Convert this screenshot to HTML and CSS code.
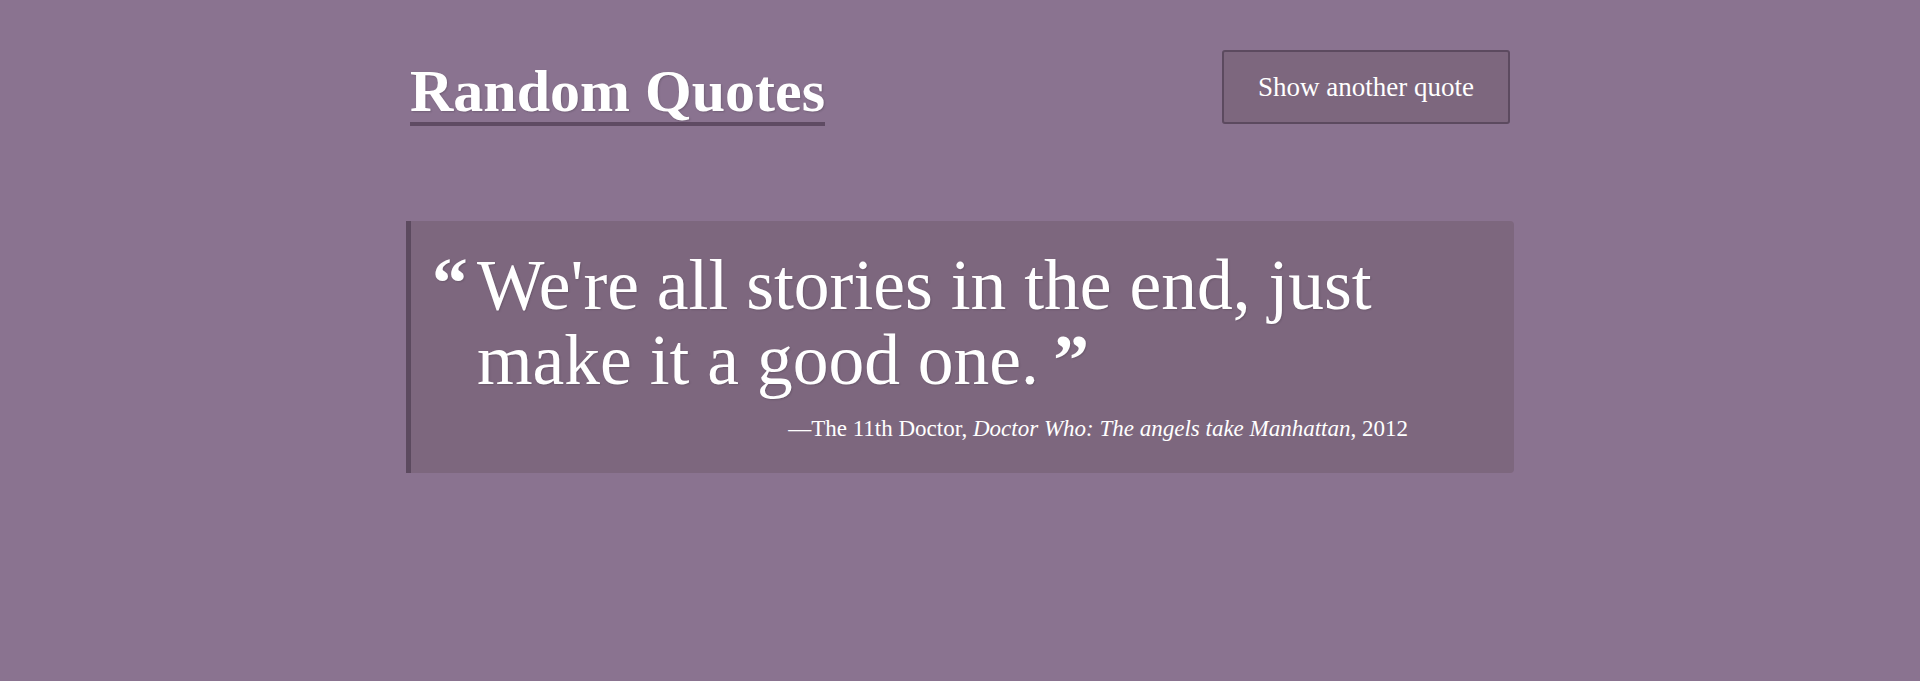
FILE: index.html
```html
<!DOCTYPE html>
<html lang="en">
<head>
<meta charset="utf-8">
<title>Random Quotes</title>
<link rel="stylesheet" href="styles.css">
</head>
<body>
<div class="container">
  <header class="header">
    <h1 class="title">Random Quotes</h1>
    <button class="btn" type="button">Show another quote</button>
  </header>
  <blockquote class="quote">
    <p class="quote-text">We're all stories in the end, just make it a good one.</p>
    <footer class="quote-source">—The 11th Doctor, <cite class="quote-cite">Doctor Who: The angels take Manhattan</cite>, 2012</footer>
  </blockquote>
</div>
</body>
</html>
```

FILE: styles.css
```css
html, body {
  margin: 0;
  padding: 0;
}

body {
  background: #8a7390;
  color: #ffffff;
  font-family: "Liberation Serif", "Times New Roman", serif;
  min-height: 681px;
}

.container {
  width: 1100px;
  margin: 0 auto;
}

.header {
  display: flex;
  justify-content: space-between;
  align-items: flex-start;
  padding-top: 50px;
}

.title {
  margin: 11px 0 0;
  font-size: 60px;
  font-weight: 700;
  line-height: 1;
  padding-bottom: 1px;
  border-bottom: 4px solid #5f4b63;
  text-shadow: 1px 1px 2px rgba(0, 0, 0, 0.18);
}

.btn {
  width: 288px;
  height: 74px;
  margin: 0;
  padding: 0;
  background: #7d677e;
  border: 2px solid #5c4a5f;
  border-radius: 3px;
  color: #ffffff;
  font-family: "Liberation Serif", "Times New Roman", serif;
  font-size: 27px;
  line-height: 1;
  cursor: pointer;
}

.quote {
  position: relative;
  margin: 95px -4px 0 -4px;
  padding: 26px 106px 29px 66px;
  background: #7d677e;
  border-left: 5px solid #5c4a5f;
  border-radius: 0 4px 4px 0;
}

.quote-text {
  margin: 0;
  font-size: 71.5px;
  line-height: 75px;
  text-shadow: 1px 1px 2px rgba(0, 0, 0, 0.15);
}

.quote-text::before {
  content: "\201C";
  position: absolute;
  left: 21px;
  top: 24px;
  font-weight: 700;
}

.quote-text::after {
  content: "\2009\201D";
  font-weight: 700;
}

.quote-source {
  margin-top: 16px;
  text-align: right;
  font-size: 23px;
  line-height: 31px;
}

.quote-cite {
  font-style: italic;
}
```
